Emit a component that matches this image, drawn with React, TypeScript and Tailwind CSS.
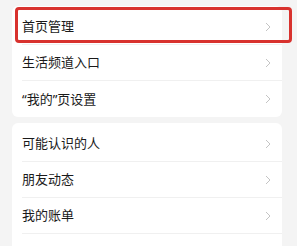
import React from 'react';

const groups = [
  ['首页管理', '生活频道入口', '“我的”页设置'],
  ['可能认识的人', '朋友动态', '我的账单', ''],
];

function Chevron() {
  return (
    <svg width="6" height="10" viewBox="0 0 6 10" className="shrink-0">
      <path d="M1 1l4 4-4 4" fill="none" stroke="#c4c4c4" strokeWidth="1" />
    </svg>
  );
}

export default function App() {
  return (
    <div
      className="relative h-[246px] w-[297px] overflow-hidden bg-[#f4f4f4] pt-[6px]"
      style={{ fontFamily: '"Noto Sans", "Noto Sans CJK SC", sans-serif' }}
    >
      <div className="flex flex-col gap-[6px] pl-[12px] pr-[15px]">
        {groups.map((rows, g) => (
          <div key={g} className="rounded-[6px] bg-white pt-[3px]">
            {rows.map((label, i) => (
              <div key={i} className="pl-[10px]">
                <div
                  className={`flex h-[36px] items-center justify-between pr-[11px] ${
                    i < rows.length - 1 ? 'border-b border-[#f0f0f0]' : ''
                  }`}
                >
                  <span className="text-[13px] leading-none text-[#1a1a1a]">{label}</span>
                  {label && <Chevron />}
                </div>
              </div>
            ))}
          </div>
        ))}
      </div>

      {/* 标注框 */}
      <div className="absolute left-[15px] top-[7px] h-[36px] w-[277px] rounded-[4px] border-[3px] border-[#d8322e]" />
    </div>
  );
}
